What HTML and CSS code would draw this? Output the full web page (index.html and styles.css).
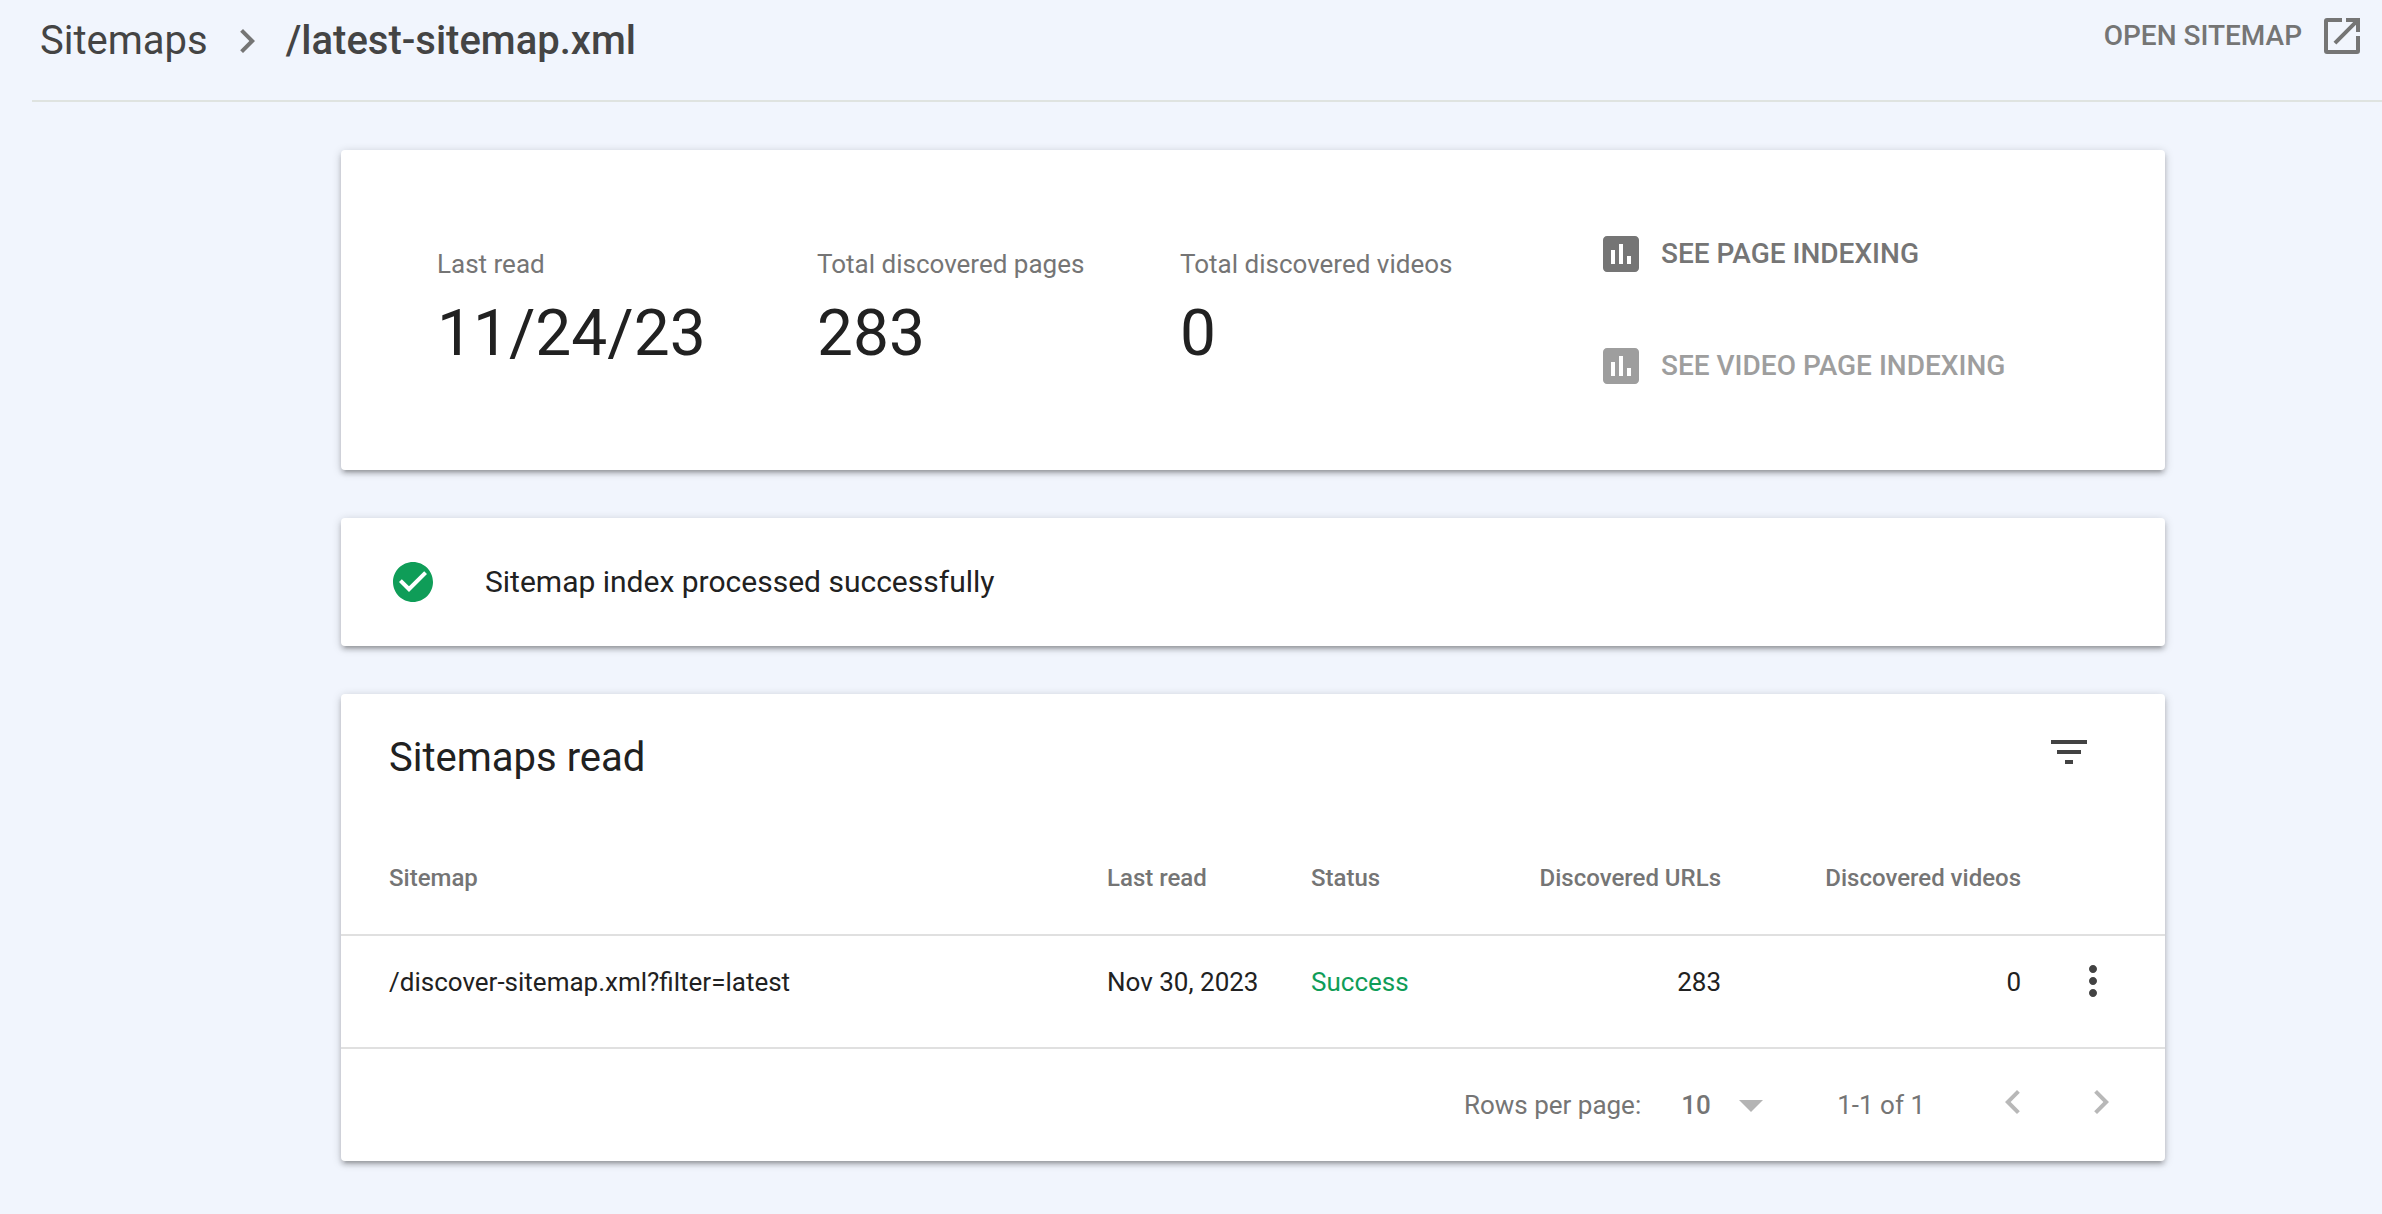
FILE: index.html
```html
<!DOCTYPE html>
<html lang="en">
<head>
<meta charset="utf-8">
<meta name="viewport" content="width=device-width, initial-scale=1">
<title>Sitemaps – /latest-sitemap.xml</title>
<link rel="stylesheet" href="styles.css">
</head>
<body>
<header class="page-header">
  <nav class="breadcrumb" aria-label="Breadcrumb">
    <a class="crumb" href="#sitemaps">Sitemaps</a>
    <svg class="icon crumb-arrow" viewBox="0 0 24 24" aria-hidden="true"><path d="M10 6L8.59 7.41 13.17 12l-4.58 4.59L10 18l6-6z"/></svg>
    <h1 class="crumb-current">/latest-sitemap.xml</h1>
  </nav>
  <a class="action" href="#open">
    <span>OPEN SITEMAP</span>
    <svg class="icon" viewBox="0 0 24 24" aria-hidden="true"><path d="M12 3H4.500A1.500 1.500 0 0 0 3 4.500V19.500A1.500 1.500 0 0 0 4.500 21H19.500A1.500 1.500 0 0 0 21 19.500V12H19V19H5V5H12zM14 3V5H17.590L7.760 14.830 9.170 16.240 19 6.410V10H21V3z"/></svg>
  </a>
</header>

<main class="content">
  <section class="card summary">
    <div class="stat">
      <p class="stat-label">Last read</p>
      <p class="stat-value">11/24/23</p>
    </div>
    <div class="stat">
      <p class="stat-label">Total discovered pages</p>
      <p class="stat-value">283</p>
    </div>
    <div class="stat">
      <p class="stat-label">Total discovered videos</p>
      <p class="stat-value">0</p>
    </div>
    <div class="summary-actions">
      <button class="action" type="button">
        <svg class="icon" viewBox="0 0 24 24" aria-hidden="true"><path d="M19 3H5c-1.100 0-2 .9-2 2v14c0 1.100.9 2 2 2h14c1.100 0 2-.9 2-2V5c0-1.100-.9-2-2-2zM9 17H7v-7h2v7zm4 0h-2V7h2v10zm4 0h-2v-4h2v4z"/></svg>
        <span>SEE PAGE INDEXING</span>
      </button>
      <button class="action" type="button" disabled>
        <svg class="icon" viewBox="0 0 24 24" aria-hidden="true"><path d="M19 3H5c-1.100 0-2 .9-2 2v14c0 1.100.9 2 2 2h14c1.100 0 2-.9 2-2V5c0-1.100-.9-2-2-2zM9 17H7v-7h2v7zm4 0h-2V7h2v10zm4 0h-2v-4h2v4z"/></svg>
        <span>SEE VIDEO PAGE INDEXING</span>
      </button>
    </div>
  </section>

  <section class="card notice">
    <svg class="icon notice-icon" viewBox="0 0 24 24" aria-hidden="true"><path d="M12 2C6.480 2 2 6.480 2 12s4.480 10 10 10 10-4.480 10-10S17.520 2 12 2zm-2 15l-5-5 1.410-1.410L10 14.170l7.590-7.590L19 8l-9 9z"/></svg>
    <p class="notice-text">Sitemap index processed successfully</p>
  </section>

  <section class="card">
    <div class="table-header">
      <h2 class="table-title">Sitemaps read</h2>
      <button class="icon-button" type="button" aria-label="Filter rows">
        <svg class="icon" viewBox="0 0 24 24" aria-hidden="true"><path d="M10 18h4v-2h-4v2zM3 6v2h18V6H3zm3 7h12v-2H6v2z"/></svg>
      </button>
    </div>
    <table class="sitemaps">
      <thead>
        <tr>
          <th class="col-sitemap" scope="col">Sitemap</th>
          <th class="col-date" scope="col">Last read</th>
          <th class="col-status" scope="col">Status</th>
          <th class="col-urls number" scope="col">Discovered URLs</th>
          <th class="col-videos number" scope="col">Discovered videos</th>
          <td class="col-menu"></td>
        </tr>
      </thead>
      <tbody>
        <tr>
          <td class="col-sitemap">/discover-sitemap.xml?filter=latest</td>
          <td>Nov 30, 2023</td>
          <td class="success">Success</td>
          <td class="number">283</td>
          <td class="number">0</td>
          <td class="col-menu">
            <button class="icon-button" type="button" aria-label="More options">
              <svg class="icon" viewBox="0 0 24 24" aria-hidden="true"><path d="M12 8c1.100 0 2-.9 2-2s-.9-2-2-2-2 .9-2 2 .9 2 2 2zm0 2c-1.100 0-2 .9-2 2s.9 2 2 2 2-.9 2-2-.9-2-2-2zm0 6c-1.100 0-2 .9-2 2s.9 2 2 2 2-.9 2-2-.9-2-2-2z"/></svg>
            </button>
          </td>
        </tr>
      </tbody>
    </table>
    <div class="pagination">
      <label for="rows">Rows per page:</label>
      <span class="rows-field">
        <select class="rows-select" id="rows">
          <option>10</option>
          <option>25</option>
          <option>50</option>
        </select>
        <svg class="rows-arrow" viewBox="0 0 24 12" aria-hidden="true"><path d="M0 0h24L12 12z"/></svg>
      </span>
      <span class="range">1-1 of 1</span>
      <div class="pager">
        <button class="icon-button" type="button" aria-label="Previous page" disabled>
          <svg class="icon" viewBox="0 0 24 24" aria-hidden="true"><path d="M15.410 7.410L14 6l-6 6 6 6 1.410-1.410L10.830 12z"/></svg>
        </button>
        <button class="icon-button" type="button" aria-label="Next page" disabled>
          <svg class="icon" viewBox="0 0 24 24" aria-hidden="true"><path d="M10 6L8.590 7.410 13.170 12l-4.580 4.590L10 18l6-6z"/></svg>
        </button>
      </div>
    </div>
  </section>
</main>
</body>
</html>
```

FILE: styles.css
```css
:root {
  --page: #f1f5fd;
  --text: #212121;
  --strong: #444;
  --muted: #757575;
  --disabled: #9e9e9e;
  --line: #e0e0e0;
  --green: #0f9d58;
}

* {
  box-sizing: border-box;
}

body {
  margin: 0;
  background: var(--page);
  color: var(--text);
  font-family: Roboto, "Liberation Sans", sans-serif;
  font-size: 26px;
  line-height: 32px;
}

h1,
h2,
p {
  margin: 0;
}

button,
select {
  margin: 0;
  padding: 0;
  border: 0;
  background: none;
  font: inherit;
}

.icon {
  display: block;
  flex: none;
  width: 48px;
  height: 48px;
  fill: currentColor;
}

.page-header {
  display: flex;
  align-items: flex-start;
  justify-content: space-between;
  margin-left: 32px;
  padding: 12px 16px 30px 8px;
  border-bottom: 2px solid #dfe3e0;
}

.breadcrumb {
  display: flex;
  align-items: center;
  gap: 15px;
  color: var(--strong);
  font-family: "Google Sans", Roboto, sans-serif;
  font-size: 40px;
  line-height: 58px;
}

.crumb {
  color: inherit;
  text-decoration: none;
}

.crumb-arrow {
  color: var(--muted);
}

.crumb-current {
  font-size: 40px;
  font-weight: 500;
}

.action {
  display: flex;
  align-items: center;
  gap: 16px;
  color: var(--muted);
  font-size: 28px;
  font-weight: 500;
  line-height: 48px;
  text-decoration: none;
  white-space: nowrap;
}

.action:disabled {
  color: var(--disabled);
}

.content {
  display: flex;
  flex-direction: column;
  align-items: center;
  gap: 48px;
  padding: 48px 0 48px 124px;
}

.card {
  width: 100%;
  max-width: 1824px;
  border-radius: 4px;
  background: #fff;
  box-shadow: 0 4px 4px rgba(0, 0, 0, .14), 0 6px 2px -4px rgba(0, 0, 0, .12), 0 2px 10px rgba(0, 0, 0, .2);
}

.summary {
  display: grid;
  grid-template-columns: 380fr 363fr 417fr 472fr;
  padding: 80px 96px;
}

.stat {
  padding-top: 16px;
}

.stat-label {
  color: var(--muted);
  line-height: 36px;
}

.stat-value {
  margin-top: 16px;
  font-size: 64px;
  line-height: 72px;
}

.summary-actions {
  display: flex;
  flex-direction: column;
  align-items: flex-start;
  gap: 64px;
}

.notice {
  display: flex;
  align-items: center;
  gap: 48px;
  padding: 40px 48px;
}

.notice-icon {
  color: var(--green);
}

.notice-text {
  font-size: 30px;
}

.table-header {
  display: flex;
  align-items: flex-start;
  justify-content: space-between;
  padding: 34px 72px 0 48px;
}

.table-title {
  font-size: 40px;
  font-weight: 400;
  line-height: 60px;
}

.icon-button {
  display: block;
  color: #424242;
}

.icon-button:disabled {
  color: #b8b8b8;
}

.sitemaps {
  width: 100%;
  border-collapse: collapse;
  table-layout: fixed;
}

.sitemaps th {
  padding: 74px 0 40px;
  color: var(--muted);
  font-size: 24px;
  font-weight: 500;
  text-align: left;
}

.sitemaps td {
  padding: 30px 0 49px;
  vertical-align: top;
}

.sitemaps tr {
  border-bottom: 2px solid var(--line);
}

.sitemaps .col-sitemap {
  padding-left: 48px;
}

.col-date {
  width: 204px;
}

.col-status {
  width: 200px;
}

.col-urls {
  width: 210px;
}

.col-videos {
  width: 300px;
}

.sitemaps .col-menu {
  width: 144px;
  padding: 21px 48px 40px;
}

.sitemaps .number {
  text-align: right;
}

.success {
  color: var(--green);
}

.pagination {
  display: flex;
  align-items: center;
  justify-content: flex-end;
  min-height: 112px;
  padding-right: 40px;
  color: var(--muted);
}

.rows-field {
  position: relative;
  margin-left: 40px;
}

.rows-select {
  appearance: none;
  display: block;
  width: 82px;
  color: inherit;
  font-weight: 500;
}

.rows-arrow {
  position: absolute;
  top: 11px;
  right: 0;
  width: 24px;
  height: 12px;
  fill: #b4b4b4;
  pointer-events: none;
}

.range {
  margin-left: 74px;
}

.pager {
  display: flex;
  gap: 40px;
  margin-left: 64px;
  padding-bottom: 6px;
}
```
